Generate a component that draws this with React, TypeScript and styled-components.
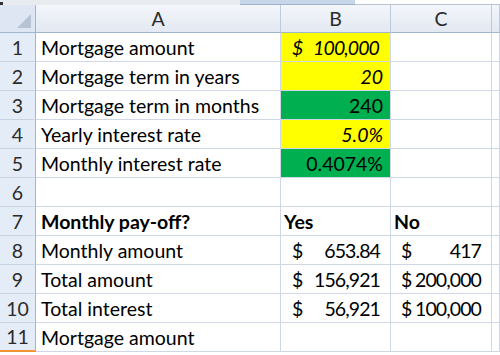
import React from "react";
import styled, { createGlobalStyle, css } from "styled-components";

const Global = createGlobalStyle`
  html, body { margin: 0; padding: 0; background: #ffffff; }
  body { font-family: "Lato", "Liberation Sans", sans-serif; overflow: hidden; }
`;

const Page = styled.div`
  width: 500px;
  height: 355px;
  overflow: hidden;
  display: flex;
  flex-direction: column;
`;

const TopStrip = styled.div`
  height: 5px;
  display: flex;
  flex-shrink: 0;
`;

const StripLeft = styled.div`
  width: 240px;
  background: #e8ecf1;
  position: relative;
  &::before {
    content: "";
    position: absolute;
    left: 0;
    top: 2px;
    width: 3px;
    height: 3px;
    background: #333;
  }
`;

const StripMid = styled.div`
  width: 115px;
  background: #c8d6ea;
  border-bottom: 1px solid #9fb3cf;
  box-sizing: border-box;
`;

const StripRight = styled.div`
  flex: 1;
  background: #ffffff;
  border-bottom: 1px solid #b9c3cf;
  box-sizing: border-box;
`;

const Sheet = styled.div`
  display: grid;
  grid-template-columns: 36px 245px 110px 101px 1fr;
  grid-auto-rows: 29px;
  grid-template-rows: 28px;
  font-size: 19.5px;
  color: #000;
`;

const ColHead = styled.div`
  box-sizing: border-box;
  background: linear-gradient(#f3f6fb, #e3e9f2);
  border-right: 1px solid #bccbdd;
  border-bottom: 1px solid #9eb6ce;
  display: flex;
  align-items: center;
  justify-content: center;
  color: #2b2b2b;
`;

const Corner = styled(ColHead)`
  background: #dde6f2;
  position: relative;
  border-right: 1px solid #9eb6ce;
  &::after {
    content: "";
    position: absolute;
    right: 4px;
    bottom: 4px;
    width: 0;
    height: 0;
    border-left: 14px solid transparent;
    border-bottom: 14px solid #b6c3d4;
  }
`;

const RowHead = styled.div<{ $last?: boolean }>`
  box-sizing: border-box;
  background: #e4ecf7;
  border-right: 1px solid #9eb6ce;
  border-bottom: 1px solid ${(p) => (p.$last ? "#f29436" : "#c5d3e3")};
  ${(p) => p.$last && css`border-bottom-width: 2px;`}
  display: flex;
  align-items: center;
  justify-content: center;
  color: #2b2b2b;
`;

const Cell = styled.div<{
  $bg?: string;
  $align?: "left" | "right";
  $italic?: boolean;
  $bold?: boolean;
  $pad?: number;
}>`
  box-sizing: border-box;
  border-right: 1px solid #d0d7e5;
  border-bottom: 1px solid #d0d7e5;
  background: ${(p) => p.$bg || "#ffffff"};
  display: flex;
  align-items: center;
  justify-content: ${(p) => (p.$align === "right" ? "flex-end" : "flex-start")};
  padding: 0 ${(p) => (p.$align === "right" ? (p.$pad ?? 7) : 0)}px 0
    ${(p) => (p.$align === "right" ? 0 : p.$pad ?? 4)}px;
  font-style: ${(p) => (p.$italic ? "italic" : "normal")};
  font-weight: ${(p) => (p.$bold ? 700 : 400)};
  white-space: nowrap;
  overflow: hidden;
`;

const Money = styled(Cell)<{ $left: number; $right: number }>`
  justify-content: space-between;
  padding: 0 ${(p) => p.$right}px 0 ${(p) => p.$left}px;
`;

const Amount = styled.span`
  letter-spacing: -0.9px;
`;

const YELLOW = "#ffff00";
const GREEN = "#00b050";

type Row = {
  a?: string;
  aBold?: boolean;
  b?: React.ReactNode;
  c?: React.ReactNode;
};

const Acc = ({ v, left, right, bg, italic }: { v: string; left: number; right: number; bg?: string; italic?: boolean }) => (
  <Money $left={left} $right={right} $bg={bg} $italic={italic}>
    <span>$</span>
    <Amount>{v}</Amount>
  </Money>
);

export default function App() {
  const rows: Row[] = [
    { a: "Mortgage amount", b: <Acc v="100,000" left={11} right={11} bg={YELLOW} italic /> },
    { a: "Mortgage term in years", b: <Cell $bg={YELLOW} $align="right" $italic>20</Cell> },
    { a: "Mortgage term in months", b: <Cell $bg={GREEN} $align="right">240</Cell> },
    { a: "Yearly interest rate", b: <Cell $bg={YELLOW} $align="right" $italic>5.0%</Cell> },
    { a: "Monthly interest rate", b: <Cell $bg={GREEN} $align="right">0.4074%</Cell> },
    {},
    {
      a: "Monthly pay-off?",
      aBold: true,
      b: <Cell $bold $pad={3}>Yes</Cell>,
      c: <Cell $bold $pad={3}>No</Cell>,
    },
    { a: "Monthly amount", b: <Acc v="653.84" left={11} right={10} />, c: <Acc v="417" left={10} right={10} /> },
    { a: "Total amount", b: <Acc v="156,921" left={11} right={10} />, c: <Acc v="200,000" left={10} right={10} /> },
    { a: "Total interest", b: <Acc v="56,921" left={11} right={10} />, c: <Acc v="100,000" left={10} right={10} /> },
    { a: "Mortgage amount" },
  ];

  return (
    <Page>
      <Global />
      <TopStrip>
        <StripLeft />
        <StripMid />
        <StripRight />
      </TopStrip>
      <Sheet>
        <Corner />
        <ColHead>A</ColHead>
        <ColHead>B</ColHead>
        <ColHead>C</ColHead>
        <ColHead />
        {rows.map((r, i) => (
          <React.Fragment key={i}>
            <RowHead $last={i === rows.length - 1}>{i + 1}</RowHead>
            <Cell $bold={r.aBold} $pad={5}>{r.a}</Cell>
            {r.b ?? <Cell />}
            {r.c ?? <Cell />}
            <Cell />
          </React.Fragment>
        ))}
      </Sheet>
    </Page>
  );
}
